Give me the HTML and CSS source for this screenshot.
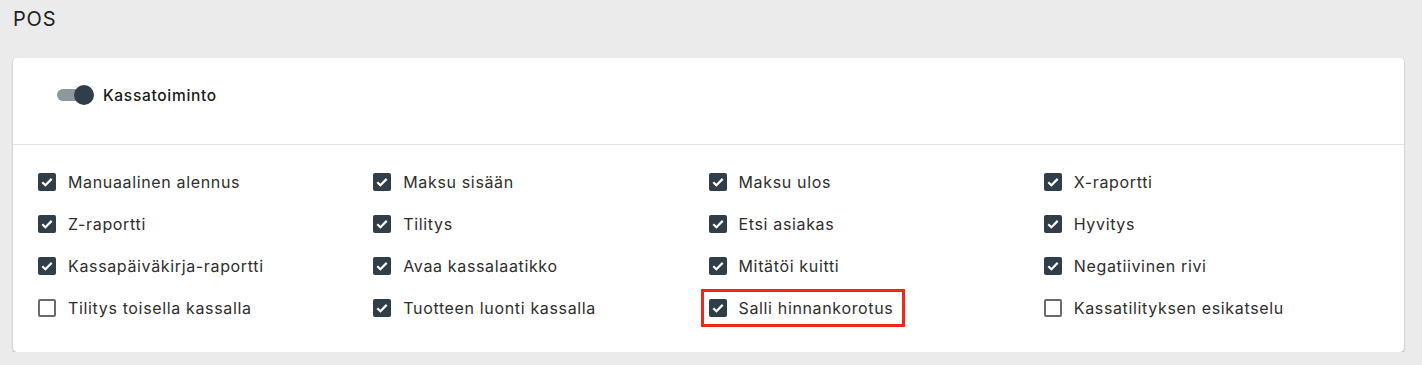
FILE: index.html
```html
<!DOCTYPE html>
<html lang="fi">
<head>
    <meta charset="UTF-8">
    <meta name="viewport" content="width=device-width, initial-scale=1.0">
    <title>POS</title>
    <link rel="stylesheet" href="styles.css">
</head>
<body>
    <h2 class="page-title">POS</h2>

    <div class="card">
        <div class="card-header">
            <label class="switch">
                <span class="switch-track"></span>
                <span class="switch-knob"></span>
            </label>
            <span class="switch-label">Kassatoiminto</span>
        </div>

        <div class="options">
            <label class="option"><span class="box checked"><svg viewBox="0 0 18 18"><path d="M4.3 9.2l3.1 3 6.3-6.3"/></svg></span>Manuaalinen alennus</label>
            <label class="option"><span class="box checked"><svg viewBox="0 0 18 18"><path d="M4.3 9.2l3.1 3 6.3-6.3"/></svg></span>Maksu sisään</label>
            <label class="option"><span class="box checked"><svg viewBox="0 0 18 18"><path d="M4.3 9.2l3.1 3 6.3-6.3"/></svg></span>Maksu ulos</label>
            <label class="option"><span class="box checked"><svg viewBox="0 0 18 18"><path d="M4.3 9.2l3.1 3 6.3-6.3"/></svg></span>X-raportti</label>

            <label class="option"><span class="box checked"><svg viewBox="0 0 18 18"><path d="M4.3 9.2l3.1 3 6.3-6.3"/></svg></span>Z-raportti</label>
            <label class="option"><span class="box checked"><svg viewBox="0 0 18 18"><path d="M4.3 9.2l3.1 3 6.3-6.3"/></svg></span>Tilitys</label>
            <label class="option"><span class="box checked"><svg viewBox="0 0 18 18"><path d="M4.3 9.2l3.1 3 6.3-6.3"/></svg></span>Etsi asiakas</label>
            <label class="option"><span class="box checked"><svg viewBox="0 0 18 18"><path d="M4.3 9.2l3.1 3 6.3-6.3"/></svg></span>Hyvitys</label>

            <label class="option"><span class="box checked"><svg viewBox="0 0 18 18"><path d="M4.3 9.2l3.1 3 6.3-6.3"/></svg></span>Kassapäiväkirja-raportti</label>
            <label class="option"><span class="box checked"><svg viewBox="0 0 18 18"><path d="M4.3 9.2l3.1 3 6.3-6.3"/></svg></span>Avaa kassalaatikko</label>
            <label class="option"><span class="box checked"><svg viewBox="0 0 18 18"><path d="M4.3 9.2l3.1 3 6.3-6.3"/></svg></span>Mitätöi kuitti</label>
            <label class="option"><span class="box checked"><svg viewBox="0 0 18 18"><path d="M4.3 9.2l3.1 3 6.3-6.3"/></svg></span>Negatiivinen rivi</label>

            <label class="option"><span class="box"></span>Tilitys toisella kassalla</label>
            <label class="option"><span class="box checked"><svg viewBox="0 0 18 18"><path d="M4.3 9.2l3.1 3 6.3-6.3"/></svg></span>Tuotteen luonti kassalla</label>
            <label class="option"><span class="highlight"><span class="box checked"><svg viewBox="0 0 18 18"><path d="M4.3 9.2l3.1 3 6.3-6.3"/></svg></span>Salli hinnankorotus</span></label>
            <label class="option"><span class="box"></span>Kassatilityksen esikatselu</label>
        </div>
    </div>
</body>
</html>
```

FILE: styles.css
```css
body {
    margin: 0;
    padding: 0 18px 0 13px;
    background-color: #ebebeb;
    font-family: "Inter", "Noto Sans", sans-serif;
    color: #222;
}

.page-title {
    margin: 0;
    padding-top: 7px;
    height: 51px;
    font-size: 20px;
    font-weight: 400;
    line-height: 24px;
    letter-spacing: 0.8px;
    color: #1f1f1f;
}

.card {
    background-color: #fff;
    border-radius: 4px;
    box-shadow: 0 1px 2px rgba(0, 0, 0, 0.35);
}

.card-header {
    display: flex;
    align-items: center;
    box-sizing: border-box;
    height: 87px;
    padding: 0 0 12px 44px;
    border-bottom: 1px solid #e3e3e3;
}

.switch {
    position: relative;
    width: 37px;
    height: 20px;
    margin-right: 9px;
}

.switch-track {
    position: absolute;
    left: 0;
    top: 4px;
    width: 30px;
    height: 12px;
    border-radius: 6px;
    background-color: #8e979b;
}

.switch-knob {
    position: absolute;
    left: 17px;
    top: 0;
    width: 20px;
    height: 20px;
    border-radius: 50%;
    background-color: #2f3e49;
}

.switch-label {
    font-size: 15.5px;
    font-weight: 500;
    letter-spacing: 0.7px;
    color: #1a1a1a;
}

.options {
    display: grid;
    grid-template-columns: repeat(4, 1fr);
    padding: 16px 25px 23px;
}

.option {
    display: flex;
    align-items: center;
    height: 42px;
    font-size: 16px;
    letter-spacing: 0.65px;
    color: #2e2e2e;
}

.box {
    flex: none;
    box-sizing: border-box;
    width: 18px;
    height: 18px;
    margin-right: 12px;
    border: 2px solid #6b6b6b;
    border-radius: 2px;
    background-color: #fff;
}

.box.checked {
    border: none;
    background-color: #2f3e49;
}

.box svg {
    display: block;
    width: 18px;
    height: 18px;
}

.box svg path {
    fill: none;
    stroke: #fff;
    stroke-width: 2.2;
}

.highlight {
    display: flex;
    align-items: center;
    margin-left: -8px;
    padding: 6px 9px 6px 5px;
    border: 3px solid #f0261b;
}
```
